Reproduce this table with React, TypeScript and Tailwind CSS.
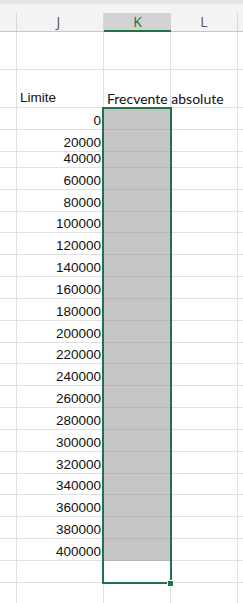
const limits = [
  0, 20000, 40000, 60000, 80000, 100000, 120000, 140000, 160000, 180000, 200000,
  220000, 240000, 260000, 280000, 300000, 320000, 340000, 360000, 380000, 400000,
];

// row heights as drawn (the 40000 row is squeezed)
const rowHeight = (i: number) => (i === 0 || i === 1 ? 'h-[22px]' : i === 2 ? 'h-[16px]' : 'h-[21.84px]');

const num = "font-['Liberation_Sans',Arial,sans-serif] text-[13.5px] text-[#111]";
const cell = 'shrink-0 border-r border-b border-[#e1e1e1]';

function Row({ h, j, k, kFilled }: { h: string; j?: React.ReactNode; k?: React.ReactNode; kFilled?: boolean }) {
  return (
    <div className={`flex ${h}`}>
      <div className={`${cell} w-[17px]`} />
      <div className={`${cell} w-[87px] flex items-end`}>{j}</div>
      <div className={`${cell} w-[67px] flex items-end ${kFilled ? 'bg-[#c6c6c6] border-b-[#b6b6b6]' : ''}`}>{k}</div>
      <div className={`${cell} w-[67px]`} />
      <div className={`${cell} flex-1 border-r-0`} />
    </div>
  );
}

export default function App() {
  return (
    <div className="relative w-[243px] h-[603px] overflow-hidden bg-white">
      {/* strip above the column headers */}
      <div className="h-[13px] bg-[#f3f3f3] border-t-[4px] border-[#e4e4e4]" />

      {/* column headers */}
      <div className="flex h-[19px] bg-[#f3f3f3] border-b border-[#c8c8c8] font-['Open_Sans',sans-serif] text-[14px] leading-none">
        <div className="w-[17px] shrink-0 border-r border-[#d6d6d6]" />
        <div className="w-[87px] shrink-0 border-r border-[#d6d6d6] flex items-center justify-center pr-[3px] text-[#555]">J</div>
        <div className="w-[67px] shrink-0 bg-[#d2d2d2] border-b-2 border-[#217346] flex items-center justify-center text-[#1e6b41] -mb-px">K</div>
        <div className="w-[67px] shrink-0 border-r border-[#d6d6d6] flex items-center justify-center text-[#555]">L</div>
        <div className="flex-1" />
      </div>

      <Row h="h-[38px]" />
      <Row
        h="h-[38px]"
        j={<span className={`${num} pl-[3px] leading-[16px] pb-[1px]`}>Limite</span>}
        k={
          <span className="font-['Lato',sans-serif] text-[14px] leading-[16px] text-[#111] pl-[3px] whitespace-nowrap relative z-10">
            Frecvente absolute
          </span>
        }
      />

      {limits.map((v, i) => (
        <Row
          key={v}
          h={rowHeight(i)}
          kFilled
          j={<span className={`${num} w-full text-right pr-[2px] leading-[16px]`}>{v}</span>}
        />
      ))}
      <Row h="h-[22px]" />
      <Row h="h-[22px]" />

      {/* selection outline with fill handle */}
      <div className="absolute left-[102px] top-[107px] w-[70px] h-[477px] border-2 border-[#217346] pointer-events-none" />
      <div className="absolute left-[168px] top-[581px] w-[5px] h-[5px] bg-[#217346] outline outline-1 outline-white" />
    </div>
  );
}
